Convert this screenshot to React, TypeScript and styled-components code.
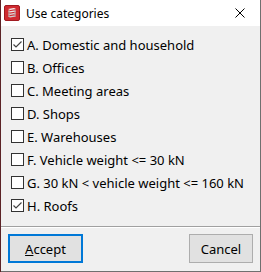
import React from "react";
import styled, { createGlobalStyle } from "styled-components";

const GlobalStyle = createGlobalStyle`
  *, *::before, *::after {
    box-sizing: border-box;
  }
  html, body {
    margin: 0;
    padding: 0;
    background: #5b2326;
  }
  body {
    font-family: "Noto Sans", "Open Sans", sans-serif;
  }
`;

const Window = styled.div`
  width: 260px;
  height: 272px;
  margin-left: 1px;
  background: #f0f0f0;
  border-right: 1px solid #6f6f6f;
  border-bottom: 1px solid #6f6f6f;
  display: flex;
  flex-direction: column;
  color: #000;
`;

const TitleBar = styled.div`
  height: 26px;
  background: #fff;
  display: flex;
  align-items: center;
  padding-left: 3px;
  flex-shrink: 0;
`;

const TitleText = styled.span`
  margin-left: 6px;
  font-size: 12px;
  flex: 1;
`;

const CloseButton = styled.div`
  width: 30px;
  height: 26px;
  margin-right: 5px;
  display: flex;
  align-items: center;
  justify-content: center;
`;

const List = styled.div`
  padding: 7px 0 0 10px;
  display: flex;
  flex-direction: column;
  flex: 1;
`;

const Row = styled.label`
  height: 23px;
  display: flex;
  align-items: center;
  font-size: 13px;
  white-space: nowrap;
`;

const Box = styled.span`
  width: 13px;
  height: 13px;
  border: 1px solid #333;
  background: #fff;
  margin-right: 3px;
  display: flex;
  align-items: center;
  justify-content: center;
  flex-shrink: 0;
`;

const Separator = styled.div`
  height: 2px;
  border-top: 1px solid #a0a0a0;
  border-bottom: 1px solid #fff;
  flex-shrink: 0;
`;

const Footer = styled.div`
  height: 43px;
  display: flex;
  justify-content: space-between;
  align-items: flex-start;
  padding: 6px 7px 0 7px;
  flex-shrink: 0;
`;

const Button = styled.div<{ $primary?: boolean; $width: number }>`
  width: ${(p) => p.$width}px;
  height: 29px;
  background: #e1e1e1;
  border: ${(p) => (p.$primary ? "2px solid #0078d7" : "1px solid #adadad")};
  display: flex;
  align-items: center;
  justify-content: center;
  font-size: 13px;
`;

const AppIcon = () => (
  <svg width="16" height="16" viewBox="0 0 16 16">
    <rect x="0.5" y="0.5" width="15" height="15" rx="1.5" fill="#d02a30" stroke="#a01a20" />
    <path d="M4 4 L10 3 L12 4 L6 5 Z" fill="#f4f4f4" />
    <path d="M4 6.5 L10 5.5 L12 6.5 L6 7.5 Z" fill="#e8e8e8" />
    <path d="M4 9 L10 8 L12 9 L6 10 Z" fill="#dcdcdc" />
    <path d="M4 11.5 L10 10.5 L12 11.5 L6 12.5 Z" fill="#cfcfcf" />
    <path d="M5 5 V12 M11 4.5 V11.5" stroke="#bbb" strokeWidth="1" />
  </svg>
);

const CloseIcon = () => (
  <svg width="10" height="10" viewBox="0 0 10 10">
    <path d="M0.5 0.5 L9.5 9.5 M9.5 0.5 L0.5 9.5" stroke="#000" strokeWidth="1" />
  </svg>
);

const Check = () => (
  <svg width="11" height="11" viewBox="0 0 11 11">
    <path d="M1.5 5.5 L4 8 L9.5 2.5" fill="none" stroke="#444" strokeWidth="1.2" />
  </svg>
);

const items = [
  { label: "A. Domestic and household", checked: true },
  { label: "B. Offices", checked: false },
  { label: "C. Meeting areas", checked: false },
  { label: "D. Shops", checked: false },
  { label: "E. Warehouses", checked: false },
  { label: "F. Vehicle weight <= 30 kN", checked: false },
  { label: "G. 30 kN < vehicle weight <= 160 kN", checked: false },
  { label: "H. Roofs", checked: true },
];

const App = () => {
  return (
    <>
      <GlobalStyle />
      <Window>
        <TitleBar>
          <AppIcon />
          <TitleText>Use categories</TitleText>
          <CloseButton>
            <CloseIcon />
          </CloseButton>
        </TitleBar>
        <List>
          {items.map((item) => (
            <Row key={item.label}>
              <Box>{item.checked && <Check />}</Box>
              {item.label}
            </Row>
          ))}
        </List>
        <Separator />
        <Footer>
          <Button $primary $width={75}>
            <span>
              <u>A</u>ccept
            </span>
          </Button>
          <Button $width={64}>Cancel</Button>
        </Footer>
      </Window>
    </>
  );
};

export default App;
